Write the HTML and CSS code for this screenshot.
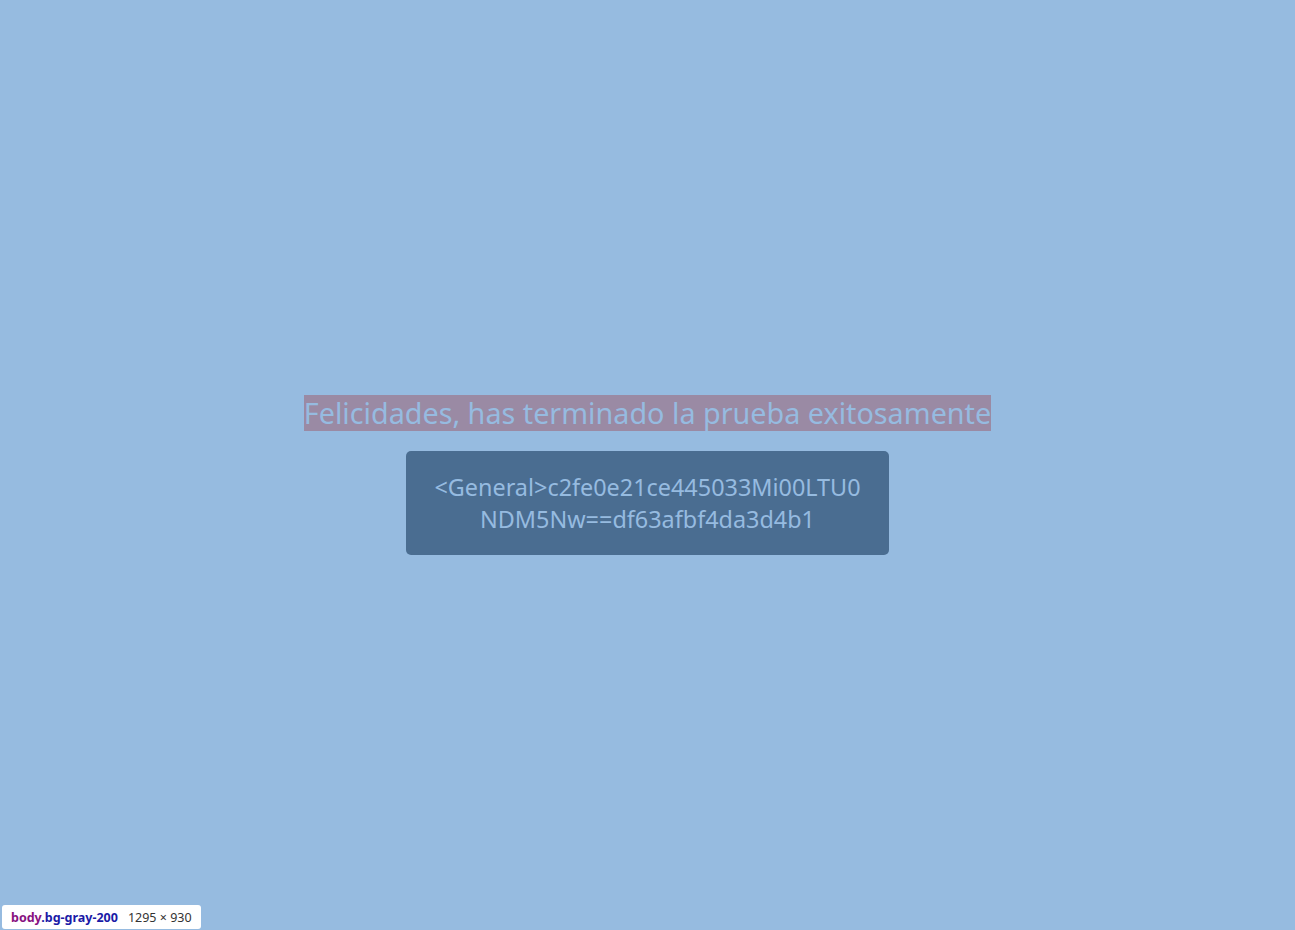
FILE: index.html
```html
<!DOCTYPE html>
<html lang="es">
<head>
<meta charset="utf-8">
<title>Prueba</title>
<link rel="stylesheet" href="styles.css">
</head>
<body class="bg-gray-200">
<main class="page">
  <h1 class="title">Felicidades, has terminado la prueba exitosamente</h1>
  <div class="code-card">&lt;General&gt;c2fe0e21ce445033Mi00LTU0<br>NDM5Nw==df63afbf4da3d4b1</div>
</main>
<div class="inspect-tip"><span class="tip-name"><span class="tip-tag">body</span>.bg-gray-200</span><span class="tip-size">1295 × 930</span></div>
</body>
</html>
```

FILE: styles.css
```css
html, body {
  margin: 0;
  padding: 0;
}
body {
  background: #96bbe0;
  font-family: "Noto Sans", "Open Sans", sans-serif;
  color: #96bbe0;
  min-height: 100vh;
}
.page {
  min-height: 100vh;
  box-sizing: border-box;
  padding-top: 20px;
  display: flex;
  flex-direction: column;
  align-items: center;
  justify-content: center;
  gap: 20px;
}
.title {
  margin: 0;
  font-weight: 400;
  font-size: 28.75px;
  line-height: 36px;
  background: #9a8aa4;
  color: #96bbe0;
  white-space: nowrap;
}
.code-card {
  width: 483px;
  box-sizing: border-box;
  padding: 20px 12px;
  background: #4a6d91;
  border-radius: 5px;
  text-align: center;
  font-size: 23.4px;
  line-height: 32px;
  color: #96bbe0;
}
.inspect-tip {
  position: fixed;
  left: 2px;
  bottom: 1px;
  height: 24px;
  box-sizing: border-box;
  padding: 0 9px;
  background: #ffffff;
  border-radius: 3px;
  display: flex;
  align-items: center;
  gap: 10px;
  font-size: 12.5px;
  font-family: "Noto Sans", "DejaVu Sans", sans-serif;
}
.tip-name {
  font-weight: 700;
  color: #1a1aa6;
}
.tip-tag {
  color: #881280;
}
.tip-size {
  color: #333333;
}
```
